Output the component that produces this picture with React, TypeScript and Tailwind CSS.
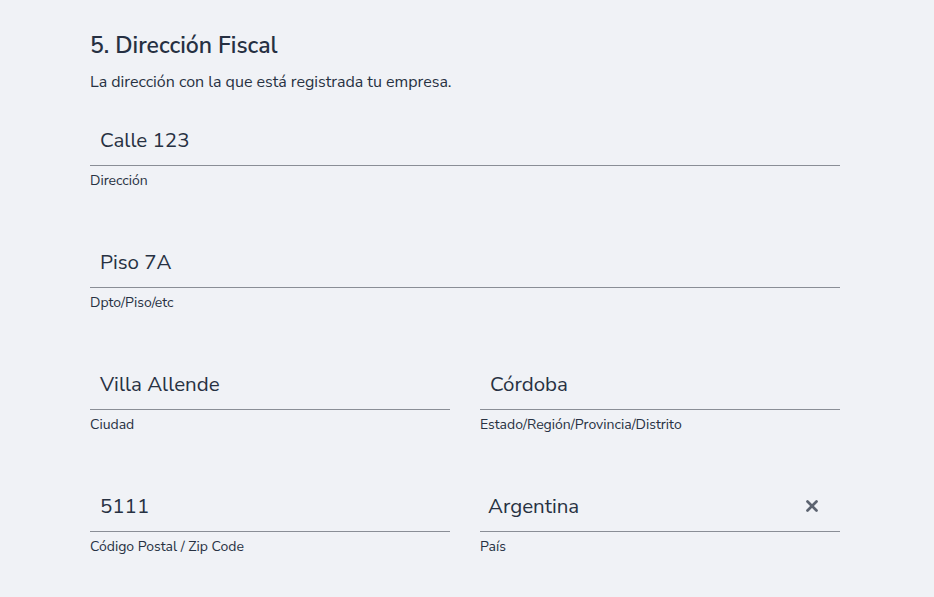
import { X } from 'lucide-react';

interface FieldProps {
  value: string;
  label: string;
  clearable?: boolean;
  indent?: string;
}

function Field({ value, label, clearable = false, indent = 'pl-[10px]' }: FieldProps) {
  return (
    <div className="mb-[52px] min-w-0">
      <div className={`h-[46px] flex items-center justify-between border-b border-[#8a8e96] ${indent} pr-[19px] pb-[5px]`}>
        <span className="text-[20.5px] text-[#273142] leading-none">{value}</span>
        {clearable && <X className="w-[18px] h-[18px] text-[#5c6370]" strokeWidth={3.6} />}
      </div>
      <div className="mt-[6px] text-[14px] leading-[18px] text-[#273142]">{label}</div>
    </div>
  );
}

export default function App() {
  return (
    <div
      className="w-[934px] h-[597px] overflow-hidden bg-[#f0f2f6] pl-[90px] pt-[32px]"
      style={{ fontFamily: '"Nunito Sans", Lato, "Noto Sans", sans-serif' }}
    >
      <div className="w-[750px]">
        <h2 className="text-[23px] leading-[28px] font-semibold text-[#263042]">5. Dirección Fiscal</h2>
        <p className="mt-[11px] text-[16px] leading-[22px] text-[#273142]">
          La dirección con la que está registrada tu empresa.
        </p>

        <div className="mt-[27px]">
          <Field value="Calle 123" label="Dirección" />
          <Field value="Piso 7A" label="Dpto/Piso/etc" />
          <div className="grid grid-cols-2 gap-x-[30px]">
            <Field value="Villa Allende" label="Ciudad" />
            <Field value="Córdoba" label="Estado/Región/Provincia/Distrito" />
            <Field value="5111" label="Código Postal / Zip Code" />
            <Field value="Argentina" label="País" clearable indent="pl-[8px]" />
          </div>
        </div>
      </div>
    </div>
  );
}
